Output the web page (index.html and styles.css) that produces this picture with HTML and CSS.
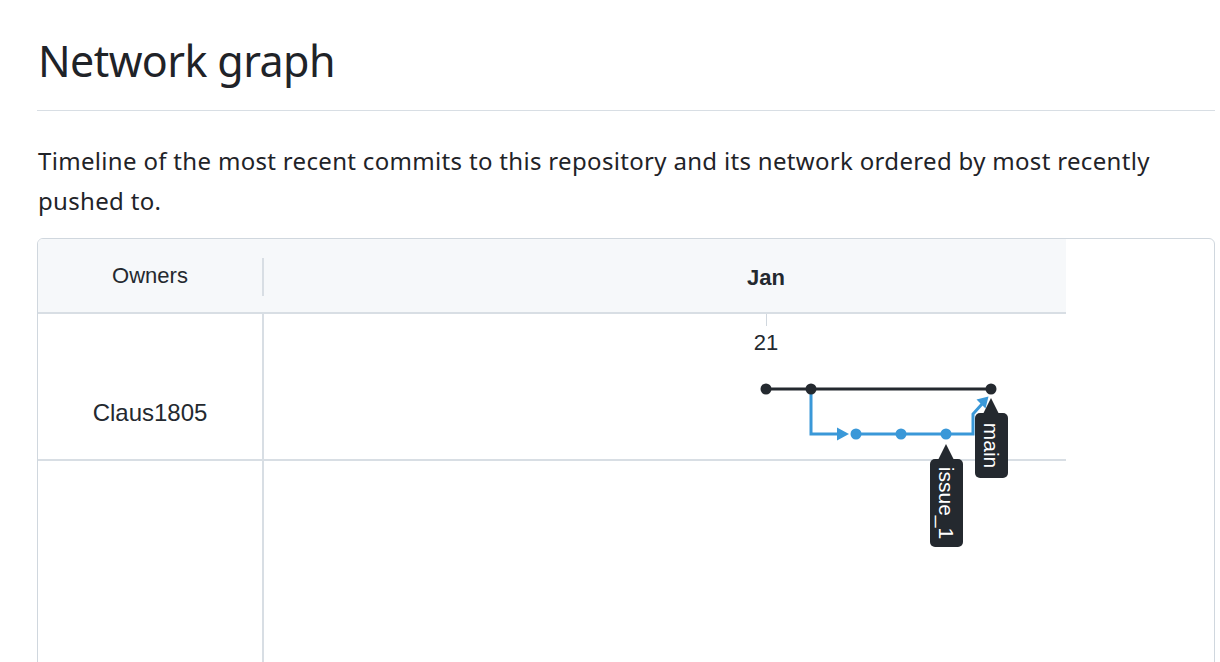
FILE: index.html
```html
<!DOCTYPE html>
<html lang="en">
<head>
<meta charset="utf-8">
<title>Network graph</title>
<link rel="stylesheet" href="styles.css">
</head>
<body>
<div class="page">
  <div class="subhead">
    <h2 class="subhead-heading">Network graph</h2>
  </div>
  <p class="lead">Timeline of the most recent commits to this repository and its network ordered by most recently pushed to.</p>

  <div class="network">
    <div class="chart">
      <div class="chart-head">
        <div class="head-owners">Owners</div>
        <div class="head-sep"></div>
        <div class="head-month"><span class="month-label">Jan</span></div>
      </div>
      <div class="chart-body">
        <div class="owner-cell owner-first">Claus1805</div>
        <div class="graph-cell graph-first"></div>
        <div class="owner-cell owner-rest"></div>
        <div class="graph-cell"></div>

        <svg class="graph" width="802" height="340" viewBox="0 0 802 340" xmlns="http://www.w3.org/2000/svg">
          <line x1="502.5" y1="0" x2="502.5" y2="12" stroke="#d0d7de" stroke-width="1"/>
          <text x="502" y="36" class="date">21</text>

          <!-- main line -->
          <line x1="502" y1="75" x2="727" y2="75" stroke="#24292f" stroke-width="3"/>

          <!-- branch issue_1 -->
          <path d="M547 75 V120 H575" fill="none" stroke="#3a98d8" stroke-width="3"/>
          <polygon points="573,113.5 573,126.5 585,120" fill="#3a98d8"/>
          <path d="M592 120 H709 V100 L718 90" fill="none" stroke="#3a98d8" stroke-width="3"/>
          <polygon points="724.5,82.5 721.5,94.5 712.5,85.5" fill="#3a98d8"/>

          <circle cx="592" cy="120" r="5.5" fill="#3a98d8"/>
          <circle cx="637" cy="120" r="5.5" fill="#3a98d8"/>
          <circle cx="682" cy="120" r="5.5" fill="#3a98d8"/>

          <circle cx="502" cy="75" r="5.5" fill="#24292f"/>
          <circle cx="547" cy="75" r="5.5" fill="#24292f"/>
          <circle cx="727" cy="75" r="5.5" fill="#24292f"/>

          <!-- label: main -->
          <polygon points="727,84 719,100 735,100" fill="#24292f"/>
          <rect x="711" y="99" width="33" height="65" rx="5" fill="#24292f"/>
          <text class="ref" transform="translate(727.5 131.5) rotate(90)">main</text>

          <!-- label: issue_1 -->
          <polygon points="682,130 674,146 690,146" fill="#24292f"/>
          <rect x="666" y="145" width="33" height="88" rx="5" fill="#24292f"/>
          <text class="ref" transform="translate(682.5 189) rotate(90)">issue_1</text>
        </svg>
      </div>
    </div>
  </div>
</div>
</body>
</html>
```

FILE: styles.css
```css
html, body {
  margin: 0;
  padding: 0;
  background: #ffffff;
}

body {
  font-family: "Segoe UI", "Noto Sans", "Open Sans", sans-serif;
  color: #1f2328;
}

.page {
  padding: 33px 5px 0 37px;
}

.subhead {
  border-bottom: 1px solid #d8dee4;
  padding-bottom: 21px;
}

.subhead-heading {
  margin: 0;
  font-size: 43px;
  line-height: 56px;
  font-weight: 400;
  letter-spacing: -0.6px;
  padding-left: 1px;
}

.lead {
  margin: 30px 0 17px 1px;
  font-size: 24px;
  line-height: 40px;
  letter-spacing: 0.32px;
}

.network {
  border: 1px solid #d0d7de;
  border-radius: 6px;
  height: 480px;
  overflow: hidden;
  background: #ffffff;
}

.chart {
  width: 1028px;
  font-family: "Liberation Sans", Arial, sans-serif;
  color: #24292f;
}

.chart-head {
  display: flex;
  align-items: center;
  height: 73px;
  background: #f6f8fa;
  border-bottom: 2px solid #d8dee4;
}

.head-owners {
  width: 224px;
  text-align: center;
  font-size: 22px;
  line-height: 24px;
}

.head-sep {
  width: 2px;
  height: 38px;
  background: #d8dee4;
  margin-top: 2px;
}

.head-month {
  flex: 1;
  padding-left: 483px;
  padding-top: 5px;
  font-size: 22px;
  line-height: 24px;
  font-weight: 700;
}

.chart-body {
  position: relative;
  display: grid;
  grid-template-columns: 226px 802px;
  grid-template-rows: 147px 300px;
}

.owner-cell {
  border-right: 2px solid #d8dee4;
  text-align: center;
  font-size: 24px;
  line-height: 24px;
}

.owner-first {
  border-bottom: 2px solid #d8dee4;
  padding-top: 87px;
  box-sizing: border-box;
  height: 147px;
}

.graph-first {
  border-bottom: 2px solid #d8dee4;
  height: 147px;
  box-sizing: border-box;
}

.graph {
  position: absolute;
  left: 226px;
  top: 0;
}

.graph .date {
  font-family: "Liberation Sans", Arial, sans-serif;
  font-size: 22px;
  fill: #24292f;
  text-anchor: middle;
}

.graph .ref {
  font-family: "Liberation Sans", Arial, sans-serif;
  font-size: 21px;
  fill: #ffffff;
  text-anchor: middle;
  dominant-baseline: central;
}
```
